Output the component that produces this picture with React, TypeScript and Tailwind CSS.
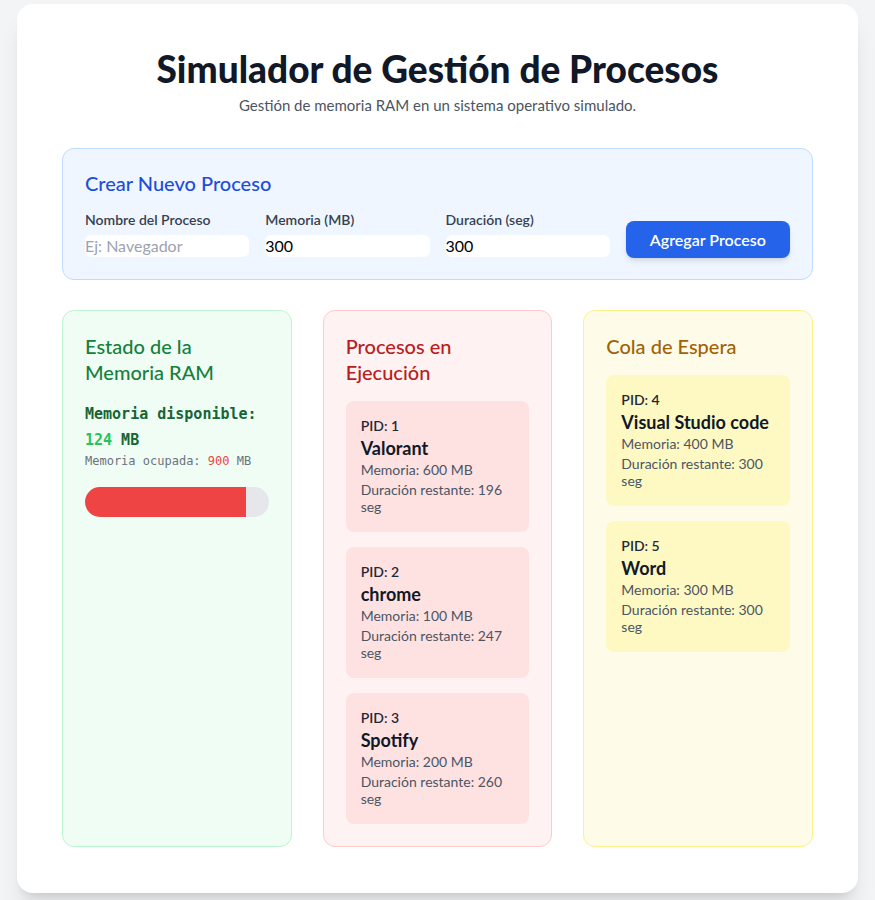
import React, { useState } from 'react';

type Proceso = {
  pid: number;
  nombre: string;
  memoria: number;
  duracion: number;
};

const MEMORIA_TOTAL = 1024;

const ejecucion: Proceso[] = [
  { pid: 1, nombre: 'Valorant', memoria: 600, duracion: 196 },
  { pid: 2, nombre: 'chrome', memoria: 100, duracion: 247 },
  { pid: 3, nombre: 'Spotify', memoria: 200, duracion: 260 },
];

const espera: Proceso[] = [
  { pid: 4, nombre: 'Visual Studio code', memoria: 400, duracion: 300 },
  { pid: 5, nombre: 'Word', memoria: 300, duracion: 300 },
];

function ProcesoCard({ p, bg }: { p: Proceso; bg: string }) {
  return (
    <div className={`${bg} rounded-lg px-[15px] pt-[15px] pb-[17px]`}>
      <p className="text-sm leading-5 font-semibold text-[#1f2937]">PID: {p.pid}</p>
      <p className="text-lg leading-6 font-bold text-[#111827]">{p.nombre}</p>
      <p className="text-sm leading-5 text-[#4b5563]">Memoria: {p.memoria} MB</p>
      <p className="text-sm leading-[17px] mt-[1px] text-[#4b5563]">Duración restante: {p.duracion} seg</p>
    </div>
  );
}

export default function App() {
  const [nombre, setNombre] = useState('');
  const [memoria, setMemoria] = useState('300');
  const [duracion, setDuracion] = useState('300');

  const ocupada = ejecucion.reduce((acc, p) => acc + p.memoria, 0);
  const disponible = MEMORIA_TOTAL - ocupada;
  const porcentaje = (ocupada / MEMORIA_TOTAL) * 100;

  return (
    <div className="min-h-screen bg-[#f3f4f6] px-[17px] pt-1 pb-2" style={{ fontFamily: 'Lato, "Noto Sans", sans-serif' }}>
      <div className="bg-white rounded-2xl shadow-xl px-[45px] pt-[45px] pb-[46px]">
        <h1 className="text-center text-[37px] font-black text-[#111827] leading-10">
          Simulador de Gestión de Procesos
        </h1>
        <p className="text-center text-[15px] leading-6 text-[#4b5563] mt-1">
          Gestión de memoria RAM en un sistema operativo simulado.
        </p>

        <div className="mt-[31px] bg-[#eff6ff] border border-[#bfdbfe] rounded-xl px-[22px] pt-[20px] pb-[21px]">
          <h2 className="text-xl leading-7 font-medium text-[#1d4ed8]">Crear Nuevo Proceso</h2>
          <div className="grid grid-cols-4 gap-4 items-end mt-[13px]">
            <div>
              <label className="block mb-1 text-sm leading-5 font-semibold text-[#374151]">Nombre del Proceso</label>
              <input
                value={nombre}
                onChange={(e) => setNombre(e.target.value)}
                placeholder="Ej: Navegador"
                className="w-full h-[22px] bg-white rounded-md text-base text-black placeholder:text-[#9ca3af] outline-none"
              />
            </div>
            <div>
              <label className="block mb-1 text-sm leading-5 font-semibold text-[#374151]">Memoria (MB)</label>
              <input
                value={memoria}
                onChange={(e) => setMemoria(e.target.value)}
                className="w-full h-[22px] bg-white rounded-md text-base text-black outline-none"
              />
            </div>
            <div>
              <label className="block mb-1 text-sm leading-5 font-semibold text-[#374151]">Duración (seg)</label>
              <input
                value={duracion}
                onChange={(e) => setDuracion(e.target.value)}
                className="w-full h-[22px] bg-white rounded-md text-base text-black outline-none"
              />
            </div>
            <button className="h-[37px] bg-[#2563eb] text-white text-base font-semibold rounded-lg shadow-md">
              Agregar Proceso
            </button>
          </div>
        </div>

        <div className="grid grid-cols-3 gap-[31px] mt-[30px] min-h-[537px]">
          <div className="bg-[#f0fdf4] border border-[#bbf7d0] rounded-xl p-[22px]">
            <h2 className="text-xl leading-[26px] font-medium text-[#15803d] mb-4">Estado de la Memoria RAM</h2>
            <div style={{ fontFamily: '"DejaVu Sans Mono", "Liberation Mono", monospace' }}>
              <p className="text-[15px] leading-[26px] font-bold text-[#166534]">
                Memoria disponible: <span className="text-[#22c55e]">{disponible}</span> MB
              </p>
              <p className="text-xs leading-4 text-[#6b7280]">
                Memoria ocupada: <span className="text-[#ef4444]">{ocupada}</span> MB
              </p>
            </div>
            <div className="mt-[18px] h-[30px] bg-[#e5e7eb] rounded-full overflow-hidden">
              <div className="h-full bg-[#ef4444]" style={{ width: `${porcentaje}%` }} />
            </div>
          </div>

          <div className="bg-[#fef2f2] border border-[#fecaca] rounded-xl p-[22px]">
            <h2 className="text-xl leading-[26px] font-medium text-[#b91c1c] mb-4">Procesos en Ejecución</h2>
            <div className="flex flex-col gap-[15px]">
              {ejecucion.map((p) => (
                <ProcesoCard key={p.pid} p={p} bg="bg-[#fee2e2]" />
              ))}
            </div>
          </div>

          <div className="bg-[#fefce8] border border-[#fef08a] rounded-xl p-[22px]">
            <h2 className="text-xl leading-[26px] font-medium text-[#a16207] mb-4">Cola de Espera</h2>
            <div className="flex flex-col gap-[15px]">
              {espera.map((p) => (
                <ProcesoCard key={p.pid} p={p} bg="bg-[#fef9c3]" />
              ))}
            </div>
          </div>
        </div>
      </div>
    </div>
  );
}
